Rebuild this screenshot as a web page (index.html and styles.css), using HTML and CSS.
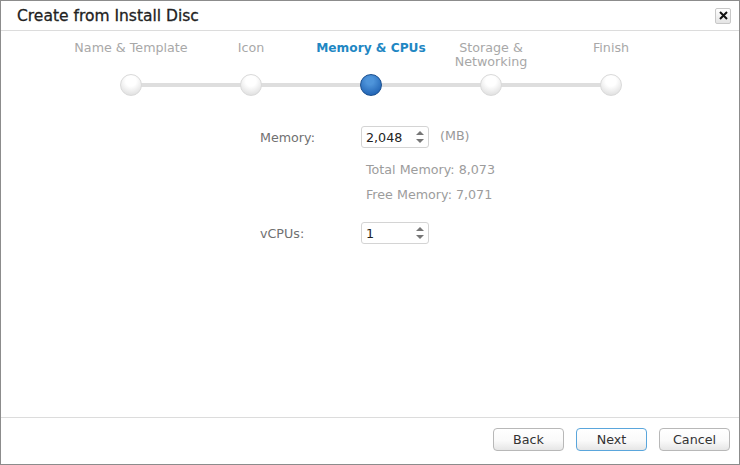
FILE: index.html
```html
<!DOCTYPE html>
<html>
<head>
<meta charset="utf-8">
<link rel="stylesheet" href="styles.css">
</head>
<body>
<div class="window">
  <div class="titlebar">
    <div class="title">Create from Install Disc</div>
    <div class="close"><svg width="9" height="9" viewBox="0 0 9 9"><path d="M1 1L8 8M8 1L1 8" stroke="#111" stroke-width="2"/></svg></div>
  </div>
  <div class="content">
    <div class="steps">
      <div class="labels">
        <div class="lbl">Name &amp; Template</div>
        <div class="lbl">Icon</div>
        <div class="lbl active">Memory &amp; CPUs</div>
        <div class="lbl">Storage &amp;<br>Networking</div>
        <div class="lbl">Finish</div>
      </div>
      <div class="track">
        <div class="line"></div>
        <div class="dot"></div>
        <div class="dot"></div>
        <div class="dot cur"></div>
        <div class="dot"></div>
        <div class="dot"></div>
      </div>
    </div>
    <div class="form">
      <div class="row">
        <div class="flabel">Memory:</div>
        <div class="spin"><span>2,048</span><span class="arrows"><i class="up"></i><i class="down"></i></span></div>
        <div class="unit">(MB)</div>
      </div>
      <div class="info first">Total Memory: 8,073</div>
      <div class="info">Free Memory: 7,071</div>
      <div class="row cpu">
        <div class="flabel">vCPUs:</div>
        <div class="spin"><span>1</span><span class="arrows"><i class="up"></i><i class="down"></i></span></div>
      </div>
    </div>
  </div>
  <div class="footer">
    <button class="btn">Back</button>
    <button class="btn primary">Next</button>
    <button class="btn">Cancel</button>
  </div>
</div>
</body>
</html>
```
FILE: styles.css
```css
html, body { margin: 0; padding: 0; }
body { width: 740px; height: 465px; background: #fff; font-family: "DejaVu Sans", sans-serif; overflow: hidden; }
.window { box-sizing: border-box; width: 740px; height: 465px; border: 1px solid #8c8c8c; display: flex; flex-direction: column; background: #fff; }
.titlebar { height: 29px; border-bottom: 1px solid #dcdcdc; display: flex; align-items: center; justify-content: space-between; padding: 0 8px 0 16px; }
.title { font-size: 15.5px; font-weight: normal; color: #222; -webkit-text-stroke: 0.3px #222; }
.close { width: 14px; height: 14px; border: 1px solid #c8c8c8; border-radius: 2px; background: linear-gradient(#fff, #e4e4e4); display: flex; align-items: center; justify-content: center; }
.content { flex: 1; border-bottom: 1px solid #dcdcdc; }
.steps { padding-top: 10px; }
.labels { display: flex; padding-left: 70px; }
.lbl { width: 120px; text-align: center; font-size: 12.7px; line-height: 14px; color: #a8a8a8; }
.lbl.active { color: #1f87c3; font-weight: bold; font-size: 12.2px; }
.track { position: relative; height: 22px; margin-top: 5px; display: flex; padding-left: 119px; gap: 98px; }
.line { position: absolute; left: 130px; width: 480px; top: 9px; height: 4px; background: #dedede; }
.dot { position: relative; width: 22px; height: 22px; box-sizing: border-box; border-radius: 50%; border: 1px solid #dadada; background: radial-gradient(circle at 50% 30%, #ffffff 30%, #e2e2e2 80%); }
.dot.cur { border-color: #1a4f8f; background: radial-gradient(circle at 45% 30%, #4e94da 20%, #2568b8 75%); }
.form { padding: 30px 0 0 259px; font-size: 12.7px; color: #707070; }
.row { display: flex; align-items: center; height: 22px; }
.flabel { width: 101px; }
.spin { box-sizing: border-box; width: 68px; height: 22px; border: 1px solid #d4d4d4; border-radius: 3px; display: flex; align-items: center; justify-content: space-between; padding: 0 4px 0 4px; color: #222; font-size: 12.7px; }
.arrows { display: flex; flex-direction: column; gap: 4px; }
.arrows i { display: block; width: 0; height: 0; border-left: 4.5px solid transparent; border-right: 4.5px solid transparent; }
.arrows .up { border-bottom: 4px solid #777; }
.arrows .down { border-top: 4px solid #777; }
.unit { margin-left: 11px; color: #999; margin-top: -4px; }
.info { margin-left: 106px; color: #9c9c9c; height: 25px; line-height: 25px; }
.info.first { margin-top: 9px; }
.cpu { margin-top: 15px; }
.footer { height: 46px; display: flex; align-items: flex-start; justify-content: flex-end; gap: 12px; padding: 10px 9px 0 0; box-sizing: border-box; }
.btn { box-sizing: border-box; width: 71px; height: 23px; border: 1px solid #b8b8b8; border-radius: 4px; background: linear-gradient(#ffffff 0%, #fafafa 55%, #e6e6e6 100%); font-family: "DejaVu Sans", sans-serif; font-size: 12.7px; color: #333; padding: 0; }
.btn.primary { border-color: #5aa6dc; }
```
